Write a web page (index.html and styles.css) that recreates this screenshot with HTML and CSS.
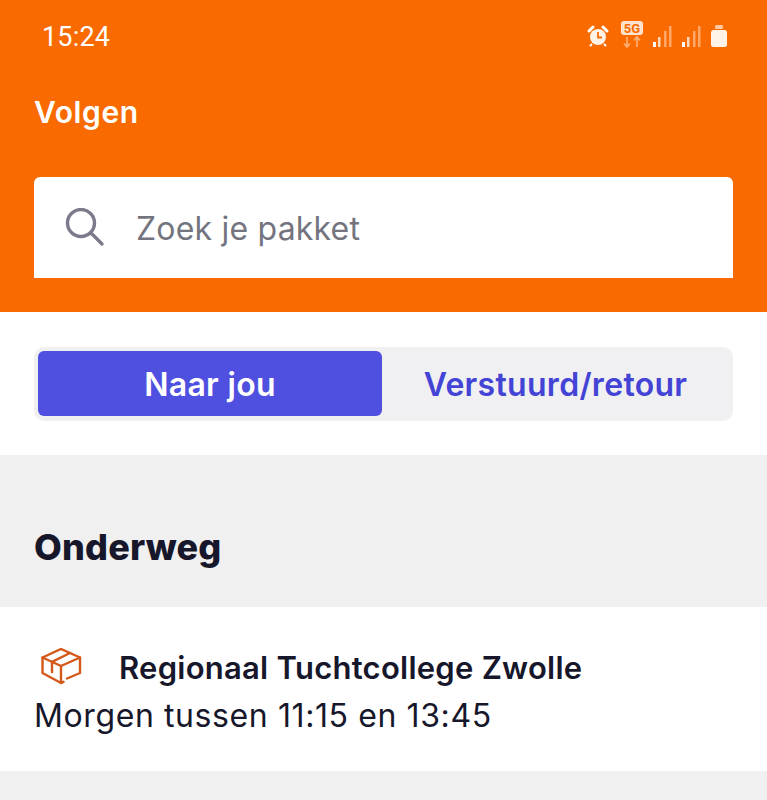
FILE: index.html
```html
<!DOCTYPE html>
<html lang="en">
<head>
  <meta charset="UTF-8">
  <title>Volgen</title>
  <link rel="stylesheet" href="styles.css">
</head>
<body>
  <header class="top">
    <div class="status">
      <span class="time">15:24</span>
      <div class="status-icons">
        <svg class="alarm" width="24" height="24" viewBox="0 0 24 24"><circle cx="12" cy="13" r="8" fill="#fff3e8"/><path d="M3 7l4-4M21 7l-4-4" stroke="#fff" stroke-width="3" stroke-linecap="round"/><path d="M12 8v5.500h4" fill="none" stroke="#f96b00" stroke-width="1.800"/><path d="M6 20l-2 2M18 20l2 2" stroke="#fff" stroke-width="2"/></svg>
        <svg class="net" width="24" height="30" viewBox="0 0 24 30"><rect x="1" y="1" width="22" height="14" rx="3" fill="#ffe3cc"/><text x="12" y="12.500" class="five-g">5G</text><path d="M7 17v10M4 23.500L7 27l3-3.500M17 27V17M14 20.500L17 17l3 3.500" fill="none" stroke="#ffb27a" stroke-width="1.600"/></svg>
        <svg class="signal" width="20" height="24" viewBox="0 0 20 24"><rect x="0" y="18" width="3" height="5" fill="#fff"/><rect x="5" y="13" width="2.500" height="10" fill="#ffd9bd"/><rect x="11" y="7" width="2.500" height="16" fill="#ffa769"/><rect x="16" y="2" width="2.500" height="21" fill="#ffa769"/></svg>
        <svg class="signal" width="20" height="24" viewBox="0 0 20 24"><rect x="0" y="18" width="3" height="5" fill="#fff"/><rect x="5" y="13" width="2.500" height="10" fill="#ffd9bd"/><rect x="11" y="7" width="2.500" height="16" fill="#ffa769"/><rect x="16" y="2" width="2.500" height="21" fill="#ffa769"/></svg>
        <svg class="battery" width="16" height="24" viewBox="0 0 16 24"><rect x="4" y="1" width="8" height="4" rx="1.500" fill="#ffc9a3"/><rect x="0" y="6" width="16" height="17" rx="2.500" fill="#fff3e8"/></svg>
      </div>
    </div>
    <h1 class="title">Volgen</h1>
    <div class="search">
      <svg class="search-icon" width="40" height="40" viewBox="0 0 40 40"><circle cx="16" cy="15" r="13.500" fill="none" stroke="#7b7b8b" stroke-width="3.400"/><path d="M26 25l11 11" stroke="#7b7b8b" stroke-width="3.400" stroke-linecap="round"/></svg>
      <span class="placeholder">Zoek je pakket</span>
    </div>
  </header>

  <div class="tabs-wrap">
    <div class="tabs">
      <div class="tab active">Naar jou</div>
      <div class="tab">Verstuurd/retour</div>
    </div>
  </div>

  <section class="list-head">
    <h2>Onderweg</h2>
  </section>

  <div class="parcel">
    <div class="parcel-top">
      <svg class="box" width="42" height="38" viewBox="0 0 42 38"><path d="M27 30.500L40 25V9.500L21 1 2.500 9.500V25L21 35 23.500 33.800" fill="none" stroke="#d4581a" stroke-width="2.400" stroke-linejoin="round" stroke-linecap="round"/><path d="M2.500 9.500L21 18 40 9.500M21 18V35M30 5L12 13.800V24" fill="none" stroke="#d4581a" stroke-width="2.400" stroke-linejoin="round" stroke-linecap="round"/></svg>
      <span class="sender">Regionaal Tuchtcollege Zwolle</span>
    </div>
    <div class="when">Morgen tussen 11:15 en 13:45</div>
  </div>
</body>
</html>
```
FILE: styles.css
```css
body {
  margin: 0;
  background-color: #f0f0f0;
  font-family: Inter, sans-serif;
  color: #17172b;
}
.top {
  background-color: #f96b00;
  height: 312px;
  padding: 0 34px;
  box-sizing: border-box;
  display: flex;
  flex-direction: column;
}
.status {
  height: 72px;
  display: flex;
  align-items: center;
  justify-content: space-between;
  padding: 0 6px 0 8px;
}
.time {
  font-family: Roboto, sans-serif;
  font-size: 27px;
  letter-spacing: 0.2px;
  padding-top: 2px;
  color: #fff;
}
.status-icons {
  display: flex;
  align-items: center;
  gap: 9px;
}
.alarm {
  margin-right: 1px;
}
.net {
  margin-top: -2px;
}
.five-g {
  font-family: Roboto, sans-serif;
  font-size: 13px;
  font-weight: 700;
  fill: #f96b00;
  text-anchor: middle;
}
.title {
  margin: 20px 0 0;
  font-size: 30px;
  font-weight: 600;
  letter-spacing: 0.6px;
  line-height: 40px;
  color: #fff;
}
.search {
  margin-top: 45px;
  height: 101px;
  background: #fff;
  border-radius: 6px 6px 0 0;
  display: flex;
  align-items: center;
  padding-left: 31px;
  gap: 31px;
}
.placeholder {
  font-size: 32px;
  letter-spacing: 0.2px;
  padding-top: 2px;
  color: #74747f;
}
.tabs-wrap {
  background: #fff;
  height: 143px;
  box-sizing: border-box;
  padding: 35px 34px 0;
}
.tabs {
  height: 74px;
  background: #f0f0f2;
  border-radius: 10px;
  padding: 4px;
  box-sizing: border-box;
  display: flex;
}
.tab {
  flex: 1;
  height: 65px;
  box-sizing: border-box;
  padding-top: 2px;
  display: flex;
  align-items: center;
  justify-content: center;
  font-size: 32px;
  font-weight: 600;
  letter-spacing: 0.3px;
  color: #4343d6;
  border-radius: 6px;
}
.tab.active {
  flex: none;
  width: 344px;
  background: #4f4fe0;
  color: #fff;
}
.list-head {
  height: 152px;
  padding: 0 34px;
  box-sizing: border-box;
  display: flex;
  align-items: flex-end;
}
.list-head h2 {
  margin: 0 0 36px;
  font-size: 36px;
  font-weight: 800;
  letter-spacing: 0.2px;
  line-height: 48px;
}
.parcel {
  background: #fff;
  height: 164px;
  box-sizing: border-box;
  padding: 40px 34px 0;
}
.parcel-top {
  display: flex;
  align-items: center;
  gap: 37px;
  padding-left: 6px;
  height: 40px;
}
.sender {
  font-size: 31px;
  font-weight: 600;
  letter-spacing: 0.25px;
}
.when {
  margin-top: 9px;
  font-size: 32px;
  letter-spacing: 0.6px;
  line-height: 40px;
}
```
